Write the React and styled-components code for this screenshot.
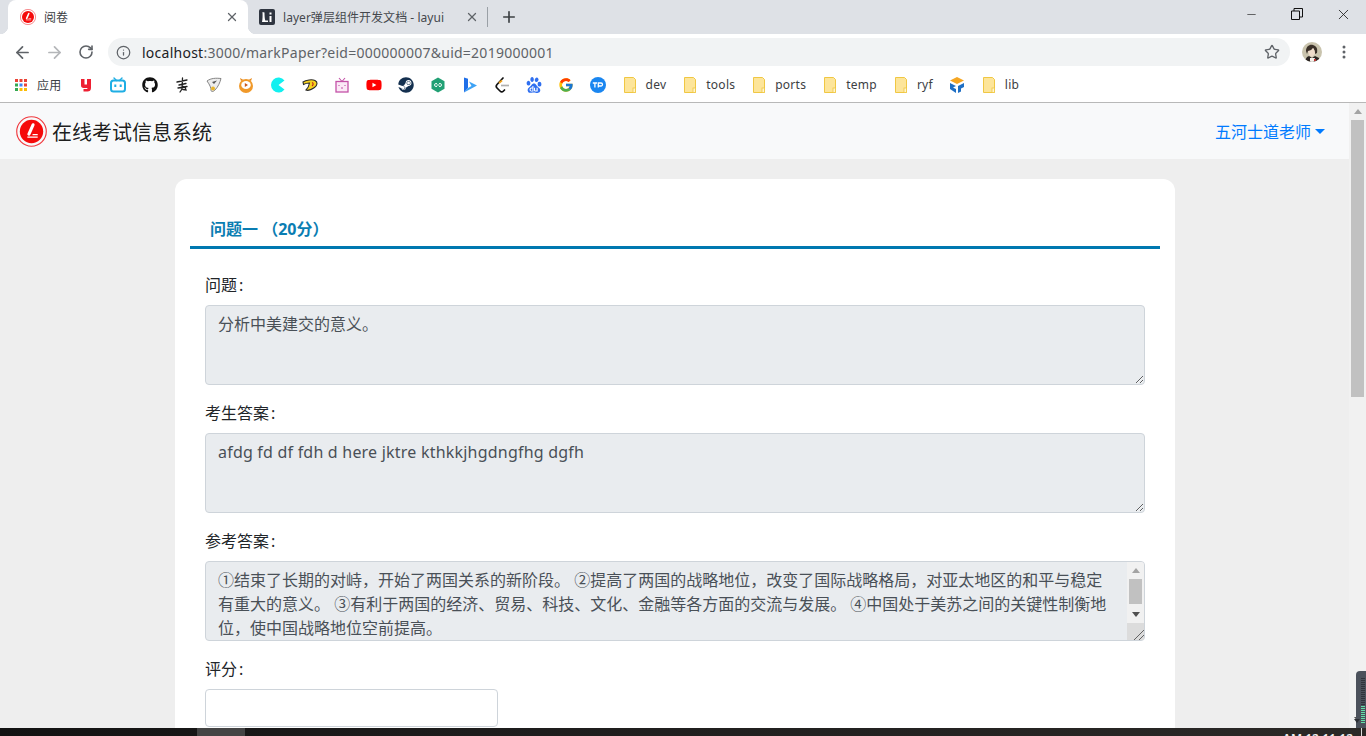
import React from "react";
import styled, { createGlobalStyle } from "styled-components";
import { ArrowLeft, ArrowRight, RotateCw, Info, Star, Plus, X, Minus } from "lucide-react";
import { FaGithub, FaSteam, FaYoutube } from "react-icons/fa";
import { FcGoogle } from "react-icons/fc";
import { SiBaidu } from "react-icons/si";

const UI = `"Noto Sans", "Noto Sans CJK SC", sans-serif`;

const Global = createGlobalStyle`
  html, body { margin: 0; padding: 0; height: 100%; overflow: hidden; }
  body { font-family: ${UI}; }
  * { box-sizing: border-box; }
`;

const Shell = styled.div`
  width: 1366px;
  height: 736px;
  display: flex;
  flex-direction: column;
  overflow: hidden;
  background: #fff;
`;

const TabStrip = styled.div`
  height: 34px;
  flex: none;
  display: flex;
  padding-left: 8px;
  background: #dee1e6;
`;

const Tab = styled.div`
  position: relative;
  width: 240px;
  display: flex;
  align-items: center;
  gap: 8px;
  padding: 0 9px 0 ${p => (p.$active ? 12 : 11)}px;
  font-size: 12px;
  color: ${p => (p.$active ? "#3c4043" : "#45484d")};
  background: ${p => (p.$active ? "#fff" : "transparent")};
  border-radius: 8px 8px 0 0;
  ${p => p.$active && `
    &::before, &::after {
      content: "";
      position: absolute;
      bottom: 0;
      width: 8px;
      height: 8px;
    }
    &::before { left: -8px; background: radial-gradient(circle at 0 0, #dee1e6 8px, #fff 8.5px); }
    &::after { right: -8px; background: radial-gradient(circle at 100% 0, #dee1e6 8px, #fff 8.5px); }
  `}
`;

const TabTitle = styled.span`
  flex: 1;
  white-space: nowrap;
  overflow: hidden;
  letter-spacing: ${p => (p.$wide ? "0.04px" : "0")};
`;

const TabClose = styled.span`
  width: 14px;
  display: flex;
  justify-content: center;
  color: #5f6368;
`;

const TabDivider = styled.div`
  width: 1px;
  height: 20px;
  margin: 7px 0 0 -1px;
  background: #9aa0a6;
`;

const NewTab = styled.div`
  width: 42px;
  display: flex;
  align-items: center;
  justify-content: center;
  color: #3c4043;
`;

const WindowControls = styled.div`
  margin-left: auto;
  display: flex;
`;

const WindowButton = styled.div`
  width: 46px;
  height: 28px;
  display: flex;
  align-items: center;
  justify-content: center;
  color: #1f1f1f;
`;

const Toolbar = styled.div`
  height: 34px;
  flex: none;
  display: flex;
  align-items: center;
  padding: 2px 6px 0;
  background: #fff;
`;

const ToolButton = styled.div`
  width: 32px;
  height: 28px;
  flex: none;
  display: flex;
  align-items: center;
  justify-content: center;
  color: ${p => (p.$muted ? "#b4b6b9" : "#5f6368")};
`;

const Omnibox = styled.div`
  flex: 1;
  height: 28px;
  margin: 0 6px;
  display: flex;
  align-items: center;
  padding: 0 10px 0 8px;
  border-radius: 14px;
  background: #f1f3f4;
  color: #5f6368;
  font-size: 14px;
`;

const UrlText = styled.span`
  flex: 1;
  margin-left: 11px;
  white-space: nowrap;
  letter-spacing: 0.25px;
`;

const Host = styled.span`
  color: #202124;
`;

const Bookmarks = styled.div`
  height: 35px;
  flex: none;
  display: flex;
  align-items: center;
  padding: 0 0 1px 5px;
  background: #fff;
  border-bottom: 1px solid #b8b8b8;
`;

const Bookmark = styled.div`
  display: flex;
  align-items: center;
  gap: 8px;
  padding: 0 8px;
  height: 28px;
  font-size: 12px;
  color: #3c4043;
`;

const BookmarkLabel = styled.span`
  letter-spacing: 0.25px;
`;

const Glyph = styled.svg`
  width: 16px;
  height: 16px;
  flex: none;
  display: block;
`;

const PageRow = styled.div`
  position: relative;
  flex: 1;
  min-height: 0;
  display: flex;
`;

const Page = styled.div`
  flex: 1;
  min-width: 0;
  overflow: hidden;
  background: #eee;
`;

const Rail = styled.div`
  width: 17px;
  flex: none;
  display: flex;
  flex-direction: column;
  background: #f1f1f1;
`;

const RailButton = styled.div`
  height: 17px;
  flex: none;
  display: flex;
  align-items: center;
  justify-content: center;
`;

const Arrow = styled.span`
  width: 0;
  height: 0;
  border-left: 4px solid transparent;
  border-right: 4px solid transparent;
  ${p => (p.$down ? "border-top" : "border-bottom")}: 5px solid ${p => p.$color};
`;

const RailThumb = styled.div`
  width: 13px;
  height: ${p => p.$height}px;
  flex: none;
  margin-left: 2px;
  background: #c1c1c1;
`;

const RailSpacer = styled.div`
  flex: 1;
`;

const NavBar = styled.nav`
  height: 56px;
  display: flex;
  align-items: center;
  justify-content: space-between;
  padding: 0 24px 0 16px;
  background: #f8f9fa;
`;

const Brand = styled.div`
  display: flex;
  align-items: center;
  gap: 5px;
  font-size: 20px;
  color: rgba(0, 0, 0, 0.9);
`;

const UserMenu = styled.div`
  display: flex;
  align-items: center;
  gap: 4px;
  font-size: 16px;
  color: #007bff;
  &::after {
    content: "";
    border-top: 5px solid #007bff;
    border-left: 5px solid transparent;
    border-right: 5px solid transparent;
  }
`;

const Main = styled.main`
  padding: 20px 0 20px 175px;
`;

const Card = styled.section`
  width: 1000px;
  height: 1237px;
  padding: 38px 15px 0;
  border-radius: 12px;
  background: #fff;
  color: #212529;
`;

const CardHeader = styled.h2`
  margin: 0;
  padding: 0 0 5px 20px;
  font-size: 16px;
  line-height: 24px;
  font-weight: 700;
  color: #0a7db2;
  border-bottom: 3px solid #0078b0;
`;

const Form = styled.form`
  padding: 24px 15px 0;
`;

const Group = styled.div`
  margin-bottom: 16px;
`;

const Label = styled.label`
  display: block;
  margin-bottom: 8px;
  font-size: 16px;
  line-height: 24px;
`;

const Colon = styled.span`
  margin-left: 2px;
`;

const AreaBox = styled.div`
  position: relative;
  height: 80px;
`;

const Area = styled.textarea`
  display: block;
  width: 100%;
  height: 80px;
  padding: 6px ${p => (p.$scroll ? 29 : 12)}px 6px 12px;
  border: 1px solid #ced4da;
  border-radius: 4px;
  background: #e9ecef;
  color: #495057;
  font: 16px/24px ${UI};
  letter-spacing: ${p => (p.$latin ? "0.21px" : "0")};
  outline: none;
  resize: vertical;
  overflow: hidden;
`;

const AreaScroll = styled.div`
  position: absolute;
  top: 1px;
  right: 1px;
  bottom: 1px;
  width: 17px;
  display: flex;
  flex-direction: column;
  background: #f1f1f1;
  border-radius: 0 3px 3px 0;
`;

const AreaThumb = styled(RailThumb)`
  margin-bottom: 2px;
`;

const AreaCorner = styled.div`
  height: 17px;
  flex: none;
  margin-top: auto;
  display: flex;
  align-items: flex-end;
  justify-content: flex-end;
  background: #dcdcdc;
`;

const ScoreInput = styled.input`
  display: block;
  width: 293px;
  height: 38px;
  padding: 6px 12px;
  border: 1px solid #ced4da;
  border-radius: 4px;
  background: #fff;
  font: 16px/24px ${UI};
  outline: none;
`;

const Meter = styled.div`
  position: absolute;
  right: 0;
  bottom: 0;
  width: 10px;
  height: 57px;
  padding: 7px 1px 4px 5px;
  display: flex;
  flex-direction: column;
  gap: 1px;
  border-radius: 4px 0 0 0;
  background: #4b515b;
  &::after {
    content: "";
    position: absolute;
    left: -2px;
    bottom: 5px;
    border-top: 4px solid #2c2f35;
    border-left: 3.5px solid transparent;
    border-right: 3.5px solid transparent;
  }
`;

const MeterTick = styled.span`
  height: 1px;
  flex: none;
  background: ${p => (p.$lit ? "#63e0a8" : "#30343b")};
`;

const Taskbar = styled.div`
  height: 8px;
  flex: none;
  display: flex;
  overflow: hidden;
  background: linear-gradient(90deg, #121212 0, #1c1b1b 30%, #2b2927 100%);
`;

const TaskItem = styled.div`
  width: 48px;
  margin-left: 197px;
  background: #444;
`;

const Clock = styled.div`
  margin-left: auto;
  margin-right: 8px;
  padding-top: 4px;
  font-size: 12px;
  line-height: 14px;
  font-weight: 600;
  color: #eee;
  white-space: nowrap;
`;

const TrayLine = styled.div`
  width: 1px;
  margin-right: 4px;
  background: #ddd;
`;

const AppLogo = ({ size = 30 }) => (
  <Glyph viewBox="0 0 30 30" style={{ width: size, height: size }}>
    <circle cx="15" cy="15" r="14.3" fill="none" stroke="#f0393e" strokeWidth="1.100" />
    <circle cx="15" cy="15" r="11.300" fill="#f50a0a" />
    <path d="M16.500 8.500 L12.500 17.500" stroke="#fff" strokeWidth="3" strokeLinecap="round" />
    <path d="M11 20.500H21M16 18H21" stroke="#fff" strokeWidth="1.100" />
  </Glyph>
);

const LayuiIcon = () => (
  <Glyph viewBox="0 0 16 16">
    <rect width="16" height="16" rx="2" fill="#2f3540" />
    <path d="M3.500 3l2 .5c0 3.500.2 6 .8 8H9V13H3c.6-2.500.7-6 .5-10z M10.500 7h2v6h-2z M10.500 3.500h2v2h-2z" fill="#fff" />
  </Glyph>
);

const AppsIcon = () => {
  const c = ["#ea4335", "#ea4335", "#ea4335", "#34a853", "#4285f4", "#ea4335", "#34a853", "#fbbc05", "#fbbc05"];
  return (
    <Glyph viewBox="0 0 16 16">
      {c.map((f, i) => (
        <rect key={i} x={2 + (i % 3) * 4.5} y={2 + Math.floor(i / 3) * 4.5} width="3" height="3" fill={f} />
      ))}
    </Glyph>
  );
};

const YIcon = () => (
  <Glyph viewBox="0 0 16 16">
    <path d="M3 2h3.500v5.500h2.500V2h4v9c0 2.500-1.500 3.500-3.500 3.500H5.500v-2.600h3.400c.4 0 .6-.3.6-.9H5.600C3.900 11 3 10 3 8.300z" fill="#ee2032" />
  </Glyph>
);

const BiliIcon = () => (
  <Glyph viewBox="0 0 16 16">
    <path d="M4 1l2.500 2.500M12 1L9.500 3.500" stroke="#1eaee4" strokeWidth="1.400" strokeLinecap="round" />
    <rect x="1" y="3.500" width="14" height="11" rx="2.500" fill="none" stroke="#1eaee4" strokeWidth="2" />
    <rect x="4.300" y="7.500" width="2" height="2.500" fill="#1eaee4" />
    <rect x="9.700" y="7.500" width="2" height="2.500" fill="#1eaee4" />
  </Glyph>
);

const InkIcon = () => (
  <Glyph viewBox="0 0 16 16">
    <path d="M3 5l10-2M5 8l7-1.500M4 11l9-1.500M8.500 1l-.5 11-2 3M8 9l3 1 1 3-3-.5" fill="none" stroke="#222" strokeWidth="1.300" strokeLinecap="round" />
  </Glyph>
);

const BirdIcon = () => (
  <Glyph viewBox="0 0 16 16">
    <path d="M1 4c4-3 9-3 14-2.500-1 4-3 8.500-6 11.500-2 2-4 2-4 0 0-2-1-5-4-9z" fill="#ececec" stroke="#777" strokeWidth=".9" />
    <path d="M6 5l5-1.500-3 3.500z" fill="#555" />
    <circle cx="7" cy="11.500" r="2" fill="#e8b52c" />
  </Glyph>
);

const PlayBallIcon = () => (
  <Glyph viewBox="0 0 16 16">
    <path d="M3 4L2 1 5.500 3zM13 4l1-3-3.500 2z" fill="#e8891a" />
    <circle cx="8" cy="9" r="7" fill="#f0992a" />
    <ellipse cx="8" cy="8" rx="4.800" ry="4" fill="#fff" />
    <path d="M6.800 6l3.200 2-3.200 2z" fill="#c9581a" />
  </Glyph>
);

const PacIcon = () => (
  <Glyph viewBox="0 0 16 16">
    <path d="M14.500 3.500A7.500 7.500 0 1 0 14.500 12.500L8.500 8z" fill="#12f0f0" />
  </Glyph>
);

const DIcon = () => (
  <Glyph viewBox="0 0 16 16">
    <path d="M1 5c3-2 9-3 12-1.500 3 1.500 2.500 5-.5 7S6 14 4 13c2-2 3-4 3.500-7-2 0-4 .3-6 1.500z" fill="#f6d21f" stroke="#2b2b2b" strokeWidth="1.100" />
    <path d="M10 5.500c1.500.5 1.500 2.500 0 3.500" fill="none" stroke="#c0271a" strokeWidth="1.200" />
  </Glyph>
);

const TvIcon = () => (
  <Glyph viewBox="0 0 16 16">
    <path d="M5 1l3 3.500L11 1" fill="none" stroke="#c452a8" strokeWidth="1.100" />
    <rect x="2" y="4.500" width="12" height="10.500" fill="#fbe9f6" stroke="#c452a8" strokeWidth="1.300" />
    <path d="M5 8v1M11 8v1M7 11h2" stroke="#c452a8" strokeWidth="1.100" />
  </Glyph>
);

const HexIcon = () => (
  <Glyph viewBox="0 0 16 16">
    <path d="M8 .5l6.500 3.700v7.600L8 15.500 1.500 11.800V4.200z" fill="#21a074" />
    <path d="M7 6.500H6a1.500 1.500 0 0 0 0 3h1M9 6.500h1a1.500 1.500 0 0 1 0 3H9M6.500 8h3" fill="none" stroke="#fff" strokeWidth=".9" />
  </Glyph>
);

const BingIcon = () => (
  <Glyph viewBox="0 0 16 16">
    <path d="M2 .5l4 1.200v9.300L2 15.500z" fill="#1f6fe8" />
    <path d="M7 4.500L15 8.500 2 15.500 6 11 9.500 9z" fill="#3da2f5" />
  </Glyph>
);

const LeetIcon = () => (
  <Glyph viewBox="0 0 16 16">
    <path d="M9 1L3 7.500c-1 1.200-1 2.500 0 3.500l3 3c1 1 2.500 1 3.500 0l1-1" fill="none" stroke="#111" strokeWidth="1.700" strokeLinecap="round" />
    <path d="M7 8.500h8" stroke="#b0b0b0" strokeWidth="1.700" />
    <path d="M5 6l3-2.500" stroke="#f0a21e" strokeWidth="1.700" />
  </Glyph>
);

const TpIcon = () => (
  <Glyph viewBox="0 0 16 16">
    <circle cx="8" cy="8" r="8" fill="#1a86f0" />
    <path d="M2.800 6h4.200M4.900 6v4.500M8.300 10.500V6h2.700a1.400 1.400 0 0 1 0 3H8.300" fill="none" stroke="#fff" strokeWidth="1.300" />
  </Glyph>
);

const Folder = () => (
  <Glyph viewBox="0 0 16 16">
    <path d="M2.500 .5h9l2 2v13h-11z" fill="#fde59a" stroke="#f0c743" strokeWidth="1" />
    <rect x="11" y="11" width="2.500" height="4.500" fill="#fff5cf" stroke="#f0c743" strokeWidth=".8" />
  </Glyph>
);

const CubeIcon = () => (
  <Glyph viewBox="0 0 16 16">
    <path d="M8 0l7 3.500-7 3.500-7-3.500z" fill="#f5a623" />
    <path d="M1 6l6 3-3 1.500 3 1.500v4L1 12zM15 6L9 9v7l3-1.500v-3L15 10z" fill="#1f6fc4" />
  </Glyph>
);

const Avatar = () => (
  <svg viewBox="0 0 20 20" width="20" height="20">
    <defs>
      <clipPath id="avatarClip"><circle cx="10" cy="10" r="10" /></clipPath>
    </defs>
    <g clipPath="url(#avatarClip)">
      <rect width="20" height="20" fill="#c9c3ad" />
      <path d="M4 9c0-5 4-7 7-6s5 3 4 8l-2 1c0-3-1-5-2-6-1 2-3 3-5 3l-1 3z" fill="#3a3028" />
      <path d="M6 9c2 0 4-1 5-3 1 1 2 3 2 6l-3 3-3-2z" fill="#efdccb" />
      <path d="M2 20l3-5 2-1 3 2 3-2 4 2 1 4z" fill="#2a2422" />
      <path d="M8 16h5l-1 4H8z" fill="#f3efe9" />
      <rect x="12" y="17" width="2" height="2" fill="#b33" />
    </g>
  </svg>
);

const MenuDots = () => (
  <Glyph viewBox="0 0 16 16">
    <circle cx="8" cy="3" r="1.500" fill="#5f6368" />
    <circle cx="8" cy="8" r="1.500" fill="#5f6368" />
    <circle cx="8" cy="13" r="1.500" fill="#5f6368" />
  </Glyph>
);

const RestoreIcon = () => (
  <Glyph viewBox="0 0 12 12" style={{ width: 12, height: 12 }}>
    <path d="M.5 3h8v8.500h-8zM3 3V.5h8.500V9H8.500" fill="none" stroke="#111" strokeWidth="1" />
  </Glyph>
);

const Grip = () => (
  <svg viewBox="0 0 10 10" width="10" height="10">
    <path d="M0 10L10 0M5 10L10 5" stroke="#555" strokeWidth=".9" />
  </svg>
);

const icons = [
  <YIcon />, <BiliIcon />, <FaGithub size={16} color="#111" />, <InkIcon />, <BirdIcon />, <PlayBallIcon />,
  <PacIcon />, <DIcon />, <TvIcon />, <FaYoutube size={16} color="#f00" />, <FaSteam size={16} color="#14304f" />,
  <HexIcon />, <BingIcon />, <LeetIcon />, <SiBaidu size={16} color="#2f6ff0" />, <FcGoogle size={16} />, <TpIcon />,
];

const folders = [
  { icon: <Folder />, label: "dev" },
  { icon: <Folder />, label: "tools" },
  { icon: <Folder />, label: "ports" },
  { icon: <Folder />, label: "temp" },
  { icon: <Folder />, label: "ryf" },
  { icon: <CubeIcon /> },
  { icon: <Folder />, label: "lib" },
];

const reference =
  "①结束了长期的对峙，开始了两国关系的新阶段。 ②提高了两国的战略地位，改变了国际战略格局，对亚太地区的和平与稳定有重大的意义。 ③有利于两国的经济、贸易、科技、文化、金融等各方面的交流与发展。 ④中国处于美苏之间的关键性制衡地位，使中国战略地位空前提高。";

export default function App() {
  return (
    <Shell>
      <Global />
      <TabStrip>
        <Tab $active>
          <AppLogo size={16} />
          <TabTitle>阅卷</TabTitle>
          <TabClose><X size={14} strokeWidth={2.2} /></TabClose>
        </Tab>
        <Tab>
          <LayuiIcon />
          <TabTitle $wide>layer弹层组件开发文档 - layui</TabTitle>
          <TabClose><X size={14} strokeWidth={2.2} /></TabClose>
        </Tab>
        <TabDivider />
        <NewTab><Plus size={18} strokeWidth={2.2} /></NewTab>
        <WindowControls>
          <WindowButton><Minus size={13} strokeWidth={1.2} /></WindowButton>
          <WindowButton><RestoreIcon /></WindowButton>
          <WindowButton><X size={17} strokeWidth={1.2} /></WindowButton>
        </WindowControls>
      </TabStrip>

      <Toolbar>
        <ToolButton><ArrowLeft size={19} strokeWidth={2.2} /></ToolButton>
        <ToolButton $muted><ArrowRight size={19} strokeWidth={2.2} /></ToolButton>
        <ToolButton><RotateCw size={16} strokeWidth={2.4} /></ToolButton>
        <Omnibox>
          <Info size={15} strokeWidth={2} />
          <UrlText><Host>localhost</Host>:3000/markPaper?eid=000000007&amp;uid=2019000001</UrlText>
          <Star size={16} strokeWidth={2} />
        </Omnibox>
        <ToolButton><Avatar /></ToolButton>
        <ToolButton><MenuDots /></ToolButton>
      </Toolbar>

      <Bookmarks>
        <Bookmark><AppsIcon /><BookmarkLabel>应用</BookmarkLabel></Bookmark>
        {icons.map((icon, i) => <Bookmark key={i}>{icon}</Bookmark>)}
        {folders.map((f, i) => (
          <Bookmark key={i}>{f.icon}{f.label && <BookmarkLabel>{f.label}</BookmarkLabel>}</Bookmark>
        ))}
      </Bookmarks>

      <PageRow>
        <Page>
          <NavBar>
            <Brand><AppLogo size={31} />在线考试信息系统</Brand>
            <UserMenu>五河士道老师</UserMenu>
          </NavBar>
          <Main>
            <Card>
              <CardHeader>问题一 （20分）</CardHeader>
              <Form>
                <Group>
                  <Label>问题<Colon>:</Colon></Label>
                  <AreaBox><Area readOnly value="分析中美建交的意义。" /></AreaBox>
                </Group>
                <Group>
                  <Label>考生答案<Colon>:</Colon></Label>
                  <AreaBox><Area $latin readOnly value="afdg fd df fdh d here jktre kthkkjhgdngfhg dgfh" /></AreaBox>
                </Group>
                <Group>
                  <Label>参考答案<Colon>:</Colon></Label>
                  <AreaBox>
                    <Area $scroll readOnly value={reference} />
                    <AreaScroll>
                      <RailButton><Arrow $color="#a3a3a3" /></RailButton>
                      <AreaThumb $height={25} />
                      <RailButton><Arrow $down $color="#505050" /></RailButton>
                      <AreaCorner><Grip /></AreaCorner>
                    </AreaScroll>
                  </AreaBox>
                </Group>
                <Group>
                  <Label>评分<Colon>:</Colon></Label>
                  <ScoreInput type="text" />
                </Group>
              </Form>
            </Card>
          </Main>
        </Page>
        <Rail>
          <RailButton><Arrow $color="#a3a3a3" /></RailButton>
          <RailThumb $height={277} />
          <RailSpacer />
          <RailButton><Arrow $down $color="#505050" /></RailButton>
        </Rail>
        <Meter>
          {Array.from({ length: 23 }, (_, i) => <MeterTick key={i} $lit={i >= 14} />)}
        </Meter>
      </PageRow>

      <Taskbar>
        <TaskItem />
        <Clock>AM 12:11:12</Clock>
        <TrayLine />
      </Taskbar>
    </Shell>
  );
}
